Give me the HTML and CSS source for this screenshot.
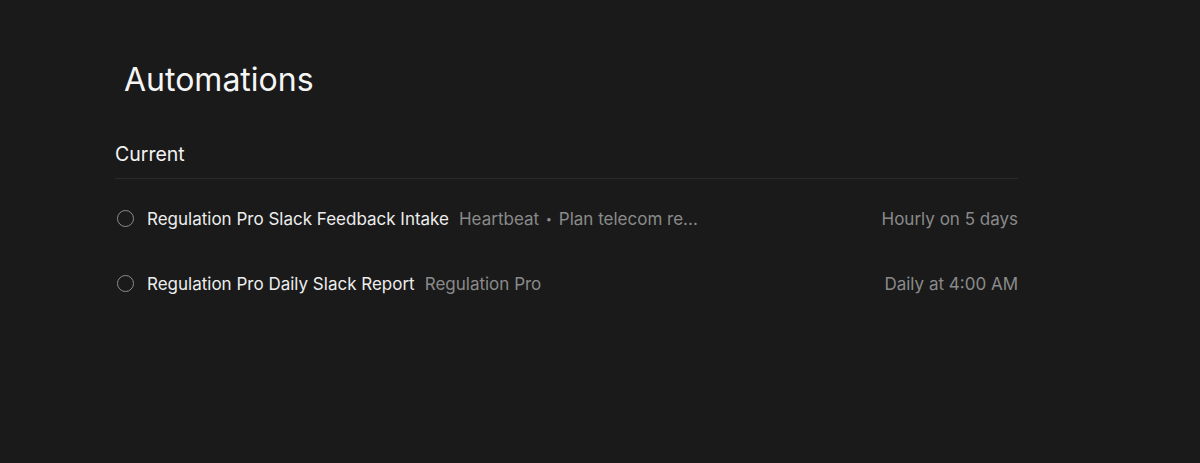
FILE: index.html
```html
<!DOCTYPE html>
<html>
<head>
<meta charset="utf-8">
<link rel="stylesheet" href="styles.css">
</head>
<body>
<main class="page">
  <h1 class="title">Automations</h1>
  <section class="section">
    <h2 class="section-title">Current</h2>
    <ul class="list">
      <li class="row">
        <span class="status"></span>
        <span class="name">Regulation Pro Slack Feedback Intake</span>
        <span class="meta">Heartbeat <span class="dot">•</span> Plan telecom re...</span>
        <span class="schedule">Hourly on 5 days</span>
      </li>
      <li class="row">
        <span class="status"></span>
        <span class="name">Regulation Pro Daily Slack Report</span>
        <span class="meta">Regulation Pro</span>
        <span class="schedule">Daily at 4:00 AM</span>
      </li>
    </ul>
  </section>
</main>
</body>
</html>
```
FILE: styles.css
```css
* { box-sizing: border-box; }
html, body {
  margin: 0;
  padding: 0;
  background: #1a1a1a;
  height: 100%;
}
body {
  font-family: Inter, "Noto Sans", sans-serif;
  color: #f2f2f2;
}
.page {
  width: 903px;
  margin-left: 115px;
  padding-top: 58px;
}
.title {
  margin: 0 0 0 9px;
  font-size: 32px;
  font-weight: 400;
  line-height: 44px;
  color: #f5f5f5;
}
.section {
  margin-top: 39px;
}
.section-title {
  margin: 0;
  font-size: 19.5px;
  font-weight: 400;
  line-height: 26px;
  padding-bottom: 11px;
  border-bottom: 1px solid #2a2a2a;
  color: #f2f2f2;
}
.list {
  list-style: none;
  margin: 0;
  padding: 0;
}
.row {
  display: flex;
  align-items: center;
  height: 65px;
  font-size: 17px;
}
.row:first-child { margin-top: 7px; }
.status {
  width: 17px;
  height: 17px;
  border: 1.5px solid #8c8c8c;
  border-radius: 50%;
  margin-left: 2px;
  margin-right: 13px;
  flex: none;
}
.name {
  color: #ededed;
  white-space: nowrap;
}
.meta {
  color: #8a8a8a;
  margin-left: 10px;
  white-space: nowrap;
}
.dot { font-size: 11px; vertical-align: 2px; margin: 0 2px; }
.schedule {
  margin-left: auto;
  color: #8a8a8a;
  white-space: nowrap;
}
```
